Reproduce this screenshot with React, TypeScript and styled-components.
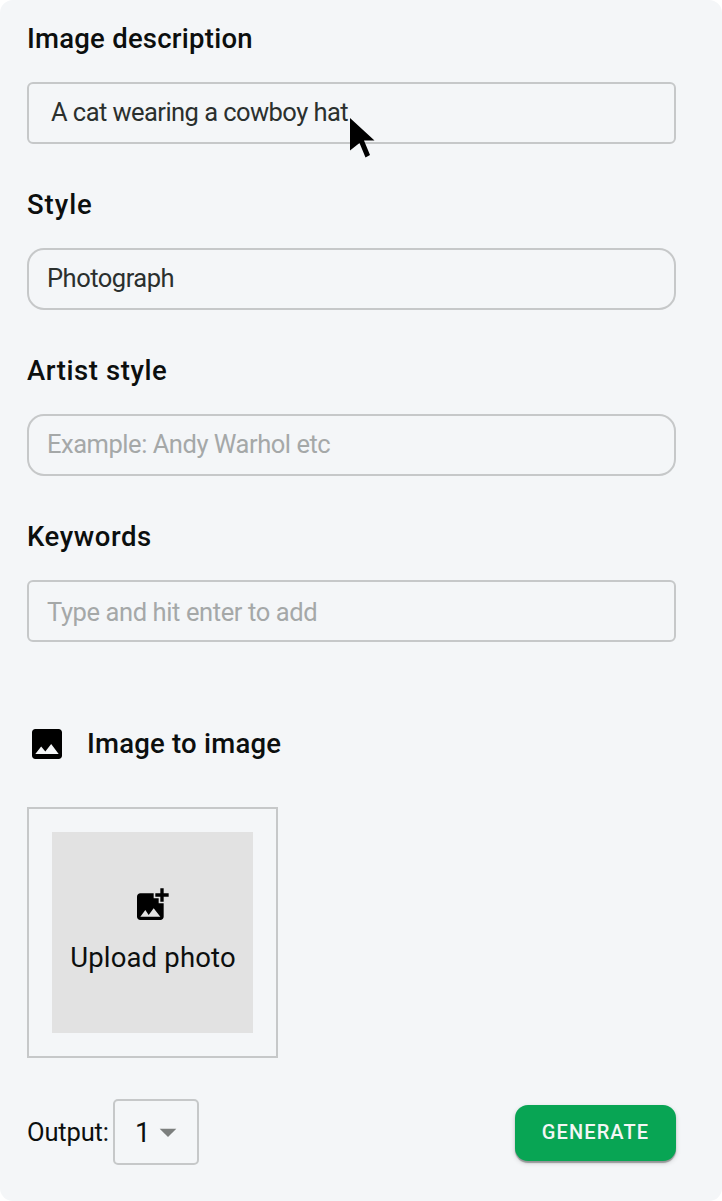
import React from "react";
import styled, { createGlobalStyle } from "styled-components";
import { MdAddPhotoAlternate, MdArrowDropDown, MdImage } from "react-icons/md";

const GlobalStyle = createGlobalStyle`
  * { box-sizing: border-box; }
  body { margin: 0; background: #fff; font-family: Roboto, "Liberation Sans", sans-serif; }
`;

const Panel = styled.main`
  position: relative;
  width: 722px;
  height: 1201px;
  padding: 22px 46px 0 27px;
  border-radius: 13px;
  background: #f4f6f8;
  color: #0c0f0e;
`;

const Fields = styled.div`
  display: flex;
  flex-direction: column;
  gap: 44px;
`;

const Field = styled.section`
  display: flex;
  flex-direction: column;
  gap: 26px;
`;

const Title = styled.h2<{ $track?: number }>`
  margin: 0;
  font-size: 27.5px;
  font-weight: 500;
  line-height: 34px;
  height: 34px;
  letter-spacing: ${(p) => p.$track ?? 0}px;
  white-space: nowrap;
`;

const TextBox = styled.div<{ $radius: number; $indent: number; $muted?: boolean; $track?: number; $drop?: number }>`
  height: 62px;
  padding: ${(p) => p.$drop ?? 0}px 0 0 ${(p) => p.$indent - 1}px;
  border: 2px solid #c6c8c9;
  border-radius: ${(p) => p.$radius}px;
  font-size: 25.5px;
  line-height: 56px;
  letter-spacing: ${(p) => p.$track ?? 0}px;
  color: ${(p) => (p.$muted ? "#a5a8a8" : "#2b302e")};
  white-space: nowrap;
`;

const ImageHeading = styled.div`
  display: flex;
  align-items: center;
  gap: 20px;
  height: 40px;
  margin-top: 82px;
`;

const UploadFrame = styled.div`
  width: 251px;
  height: 251px;
  margin-top: 43px;
  padding: 23px;
  border: 2px solid #c6c8c9;
`;

const UploadButton = styled.div`
  display: flex;
  flex-direction: column;
  align-items: center;
  width: 201px;
  height: 201px;
  padding-top: 53px;
  background: #e2e2e2;
  svg { margin-right: 1px; }
`;

const UploadText = styled.span`
  margin: 16px 0 0 1px;
  font-size: 27.5px;
  line-height: 34px;
  letter-spacing: 0.17px;
  white-space: nowrap;
`;

const Footer = styled.footer`
  display: flex;
  align-items: center;
  height: 66px;
  margin-top: 41px;
`;

const OutputLabel = styled.span`
  width: 86px;
  font-size: 25.5px;
  letter-spacing: -0.15px;
  white-space: nowrap;
`;

const Select = styled.div`
  display: flex;
  align-items: center;
  width: 86px;
  height: 66px;
  padding-left: 20px;
  border: 2px solid #c6c8c9;
  border-radius: 5px;
  font-size: 27.5px;
  svg { margin-left: -2px; color: #7c7f7e; }
`;

const Generate = styled.button`
  width: 161px;
  height: 56px;
  margin: 2px 0 0 auto;
  padding: 0 0 2px;
  border: 0;
  border-radius: 13px;
  background: #08a554;
  box-shadow: 0 2px 1px rgba(0, 0, 0, 0.3), 0 2px 5px rgba(0, 0, 0, 0.18);
  color: #f4f6f5;
  font: 500 20px Roboto, sans-serif;
  letter-spacing: 1.1px;
`;

const Pointer = styled.svg`
  position: absolute;
  left: 350px;
  top: 118px;
  width: 25px;
  height: 41px;
`;

export default function App() {
  return (
    <>
      <GlobalStyle />
      <Panel>
        <Fields>
          <Field>
            <Title $track={0.24}>Image description</Title>
            <TextBox $radius={6} $indent={23} $track={-0.56}>A cat wearing a cowboy hat</TextBox>
          </Field>
          <Field>
            <Title $track={0.95}>Style</Title>
            <TextBox $radius={17} $indent={19} $track={-0.5}>Photograph</TextBox>
          </Field>
          <Field>
            <Title $track={0.58}>Artist style</Title>
            <TextBox $radius={17} $indent={19} $track={-0.47} $muted>Example: Andy Warhol etc</TextBox>
          </Field>
          <Field>
            <Title $track={0.58}>Keywords</Title>
            <TextBox $radius={6} $indent={19} $drop={2} $track={-0.4} $muted>Type and hit enter to add</TextBox>
          </Field>
        </Fields>
        <ImageHeading>
          <MdImage size={40} color="#000" />
          <Title $track={0.22}>Image to image</Title>
        </ImageHeading>
        <UploadFrame>
          <UploadButton>
            <MdAddPhotoAlternate size={40} color="#000" />
            <UploadText>Upload photo</UploadText>
          </UploadButton>
        </UploadFrame>
        <Footer>
          <OutputLabel>Output:</OutputLabel>
          <Select>
            1
            <MdArrowDropDown size={40} />
          </Select>
          <Generate>GENERATE</Generate>
        </Footer>
        <Pointer viewBox="0 0 25 41">
          <path d="M0 0 24.5 22.5H14L20 37 15.5 39.5 9.5 25 0 32.5Z" fill="#000" />
        </Pointer>
      </Panel>
    </>
  );
}
